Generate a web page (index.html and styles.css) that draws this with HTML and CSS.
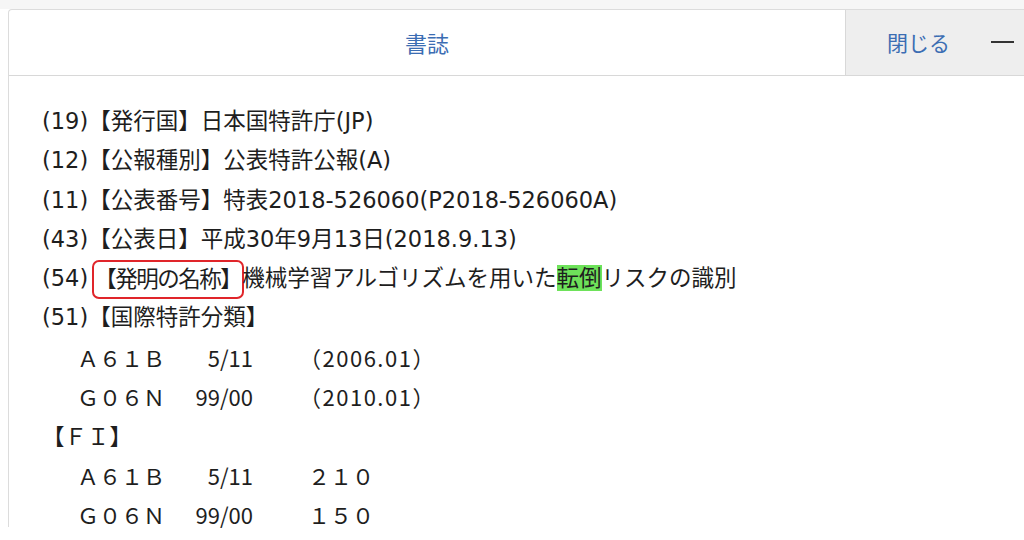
FILE: index.html
```html
<!DOCTYPE html>
<html lang="ja">
<head>
<meta charset="utf-8">
<title>書誌</title>
<link rel="stylesheet" href="styles.css">
</head>
<body>
<div class="topbar"></div>
<div class="panel">
  <div class="tabs">
    <div class="tab">書誌</div>
    <div class="actions">
      <span class="close">閉じる</span>
      <span class="minimize" aria-label="最小化"></span>
    </div>
  </div>
  <div class="content">
    <div class="line">(19)【発行国】日本国特許庁(JP)</div>
    <div class="line">(12)【公報種別】公表特許公報(A)</div>
    <div class="line">(11)【公表番号】特表2018-526060(P2018-526060A)</div>
    <div class="line">(43)【公表日】平成30年9月13日(2018.9.13)</div>
    <div class="line">(54)<span class="boxed">【発明の名称】</span>機械学習アルゴリズムを用いた<mark class="hl">転倒</mark>リスクの識別</div>
    <div class="line">(51)【国際特許分類】</div>
    <div class="cls">
      <span class="code">Ａ６１Ｂ</span><span class="num">5/11</span><span class="ver ed">（2006.01）</span>
    </div>
    <div class="cls">
      <span class="code">Ｇ０６Ｎ</span><span class="num">99/00</span><span class="ver ed">（2010.01）</span>
    </div>
    <div class="line jp">【ＦＩ】</div>
    <div class="cls">
      <span class="code">Ａ６１Ｂ</span><span class="num">5/11</span><span class="ver">２１０</span>
    </div>
    <div class="cls">
      <span class="code">Ｇ０６Ｎ</span><span class="num">99/00</span><span class="ver">１５０</span>
    </div>
  </div>
</div>
</body>
</html>
```

FILE: styles.css
```css
html, body {
  margin: 0;
  padding: 0;
  background: #ffffff;
}

body {
  width: 1024px;
  height: 540px;
  overflow: hidden;
  font-family: "DejaVu Sans", "Noto Sans CJK JP", sans-serif;
  color: #1e1e1e;
}

.topbar {
  height: 9px;
  background: #f6f6f6;
}

.panel {
  margin-left: 8px;
  width: 1040px;
  height: 517px;
  border-left: 1px solid #dcdcdc;
  border-top: 1px solid #dcdcdc;
  border-top-left-radius: 4px;
}

.tabs {
  display: flex;
  height: 65px;
  border-bottom: 1px solid #d8d8d8;
}

.tab {
  width: 836px;
  display: flex;
  align-items: center;
  justify-content: center;
  font-family: "Noto Sans CJK JP", sans-serif;
  font-size: 22px;
  color: #3b6db3;
  padding-bottom: 2px;
}

.actions {
  flex: 1;
  display: flex;
  align-items: center;
  background: #eeeeee;
  border-left: 1px solid #d8d8d8;
  padding-left: 41px;
  padding-bottom: 2px;
}

.close {
  font-family: "Noto Sans CJK JP", sans-serif;
  font-size: 21px;
  color: #3b6db3;
}

.minimize {
  display: block;
  margin-left: 41px;
  width: 23px;
  height: 2px;
  background: #333;
}

.content {
  padding: 26px 0 0 33px;
  font-size: 22.5px;
}

.line {
  height: 39.3px;
  line-height: 39.3px;
  white-space: nowrap;
}

/* red outline around the invention title label */
.boxed {
  display: inline-block;
  vertical-align: top;
  height: 35px;
  line-height: 35px;
  margin-top: 1px;
  margin-left: 4px;
  margin-right: -2px;
  border: 2px solid #e0252a;
  border-radius: 7px;
  letter-spacing: -1.5px;
  padding-right: 1px;
}

.hl {
  background: #6ee25a;
  color: inherit;
}

.jp {
  font-family: "Noto Sans CJK JP", sans-serif;
}

.cls {
  display: flex;
  height: 39.3px;
  line-height: 39.3px;
  font-family: "Noto Sans CJK JP", sans-serif;
  font-size: 22px;
  padding-left: 35px;
  white-space: nowrap;
}

.code {
  width: 90px;
}

.num {
  width: 86px;
  text-align: right;
}

.ver {
  margin-left: 55px;
}

.ver.ed {
  margin-left: 46px;
  letter-spacing: 1.5px;
}
```
